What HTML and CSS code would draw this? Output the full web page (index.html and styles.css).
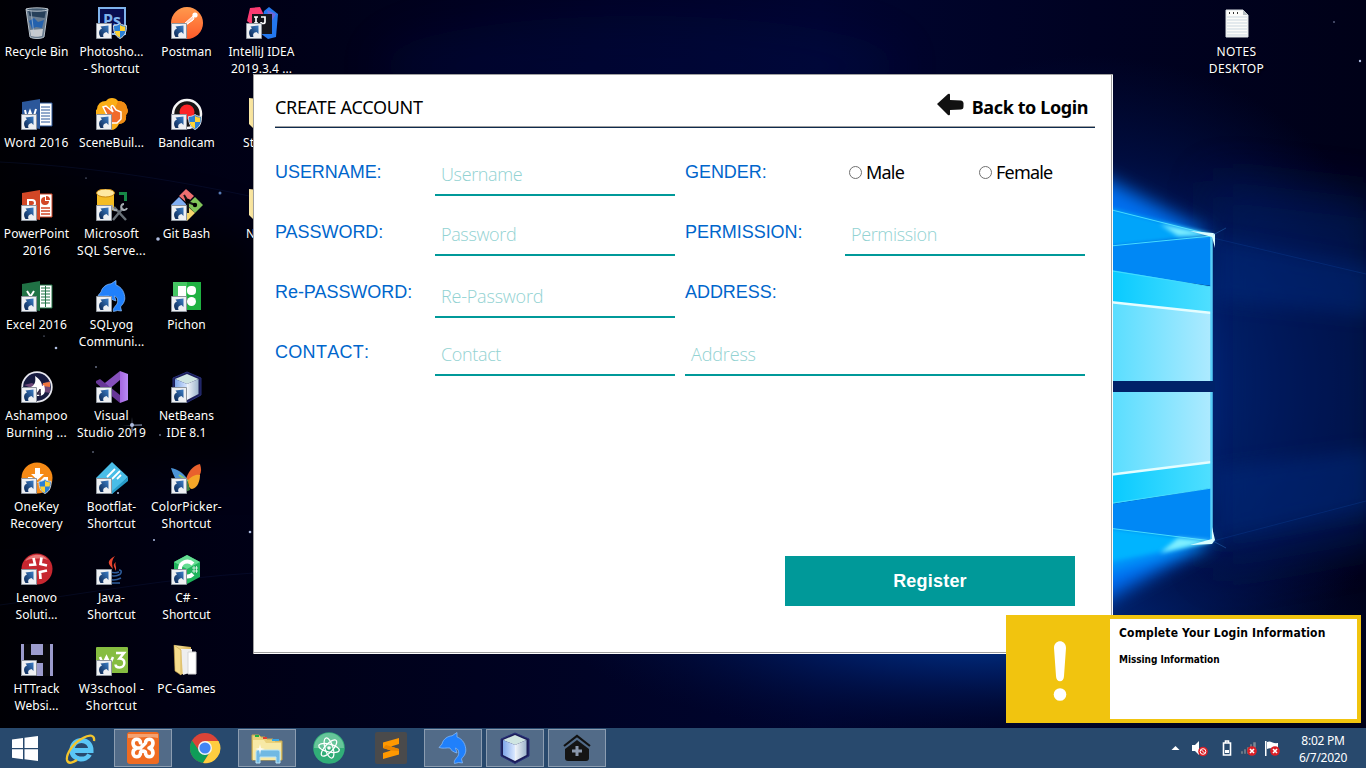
FILE: index.html
```html
<!DOCTYPE html>
<html lang="en">
<head>
<meta charset="utf-8">
<title>Create Account</title>
<link rel="stylesheet" href="styles.css">
</head>
<body>
<svg class="defs" aria-hidden="true">
  <defs>
    <linearGradient id="gShort" x1="0" y1="1" x2="1" y2="0"><stop offset="0" stop-color="#0b2550"/><stop offset="1" stop-color="#3c7ec6"/></linearGradient>
    <linearGradient id="gFolder" x1="0" x2="1"><stop offset="0" stop-color="#fbe9a6"/><stop offset="1" stop-color="#d9b356"/></linearGradient>
    <linearGradient id="gOrange" x1="0" y1="0" x2="0" y2="1"><stop offset="0" stop-color="#ff9a4d"/><stop offset="1" stop-color="#ff5a2a"/></linearGradient>
    <linearGradient id="gCube" x1="0" x2="1"><stop offset="0" stop-color="#7fa6ea"/><stop offset="1" stop-color="#dbe9ff"/></linearGradient>
    <linearGradient id="gCubeR" x1="0" x2="1"><stop offset="0" stop-color="#f2f6fb"/><stop offset="1" stop-color="#9db4cc"/></linearGradient>
    <linearGradient id="gVs" x1="0" x2="1"><stop offset="0" stop-color="#a566e0"/><stop offset="1" stop-color="#b98af5"/></linearGradient>
    <symbol id="shortcut" viewBox="0 0 16 16">
      <path d="M.5.5h15v15H.5z" fill="#eef0f3" stroke="#8e959e"/>
      <path d="M4.500 14C2 10 3 6.500 6 5.500L4.500 3.500 12.500 2.500v8.500L10.500 9C7.500 9.500 6.500 11.500 7.500 14z" fill="url(#gShort)"/>
    </symbol>
    <symbol id="shield" viewBox="0 0 14 16">
      <path d="M7 .5C9 2 11 2.500 13.500 2.500 13.500 9 12 13 7 15.500 2 13 .5 9 .5 2.500 3 2.500 5 2 7 .5z" fill="#2a7fd4" stroke="#d4d9de"/>
      <path d="M7 2c2 1 3 1.500 5.300 1.500L12 8H7zM7 8v6.500C3.500 13 2 10.500 1.800 8z" fill="#ffd332"/>
    </symbol>
    <symbol id="dolphin" viewBox="0 0 32 32">
      <path d="M2 15.500L5 12C6 7 11 4 15 3.800L20 .5V5C26 7 29 13 28.800 19 28 24 25.500 25 24.500 27L25.500 31l-4-.5-4 1C16.500 28.500 19.500 26 21 24c1.500-4 .5-7-2.500-8L20 21c-3.500-1-6-2.500-7-5-4-.5-7 1-11-.5z" fill="#2080fb" stroke="#8dc0ff" stroke-width=".7"/>
    </symbol>
    <symbol id="cube" viewBox="0 0 32 32">
      <path d="M16 1l14 6v17l-14 7.500L2 24V7z" fill="#1b1d58" stroke="#28317a"/>
      <path d="M16 3l11.500 5L16 13 4 8z" fill="#cfe5e2"/>
      <path d="M4 8l12 5v16L4 23z" fill="url(#gCube)"/>
      <path d="M16 13l11.500-5v15L16 29z" fill="url(#gCubeR)"/>
    </symbol>
    <symbol id="badx" viewBox="0 0 10 10">
      <circle cx="5" cy="5" r="4.800" fill="#dc1f26"/><path d="M3 3l4 4M7 3L3 7" stroke="#fff" stroke-width="1.600"/>
    </symbol>
  </defs>
</svg>

<main class="desktop">
  <svg class="wallpaper" viewBox="0 0 1366 768" aria-hidden="true">
    <defs>
      <radialGradient id="wGlow" gradientUnits="userSpaceOnUse" cx="1090" cy="385" r="330"><stop offset="0" stop-color="#0040a8"/><stop offset=".4" stop-color="#002272"/><stop offset=".7" stop-color="#000f45" stop-opacity=".8"/><stop offset="1" stop-color="#000e3e" stop-opacity="0"/></radialGradient>
      <radialGradient id="wFloor"><stop offset="0" stop-color="#003c9c"/><stop offset=".45" stop-color="#001f68" stop-opacity=".75"/><stop offset="1" stop-color="#000c3a" stop-opacity="0"/></radialGradient>
      <linearGradient id="wPane" x1="0" x2="1"><stop offset="0" stop-color="#4fdcff"/><stop offset="1" stop-color="#aeeaff"/></linearGradient>
      <linearGradient id="wCyan" x1="0" x2="1"><stop offset="0" stop-color="#00c8ff"/><stop offset="1" stop-color="#50dfff"/></linearGradient>
      <linearGradient id="wBase" x1="0" x2="1"><stop offset="0" stop-color="#000005"/><stop offset=".12" stop-color="#000012"/><stop offset=".35" stop-color="#000220"/><stop offset=".6" stop-color="#000530"/><stop offset=".8" stop-color="#000222"/><stop offset="1" stop-color="#000118"/></linearGradient>
      <filter id="b2" x="-50%" y="-80%" width="200%" height="260%"><feGaussianBlur stdDeviation="2"/></filter>
      <filter id="b8" x="-50%" y="-50%" width="200%" height="200%"><feGaussianBlur stdDeviation="9"/></filter>
      <filter id="b20" x="-80%" y="-80%" width="260%" height="260%"><feGaussianBlur stdDeviation="22"/></filter>
    </defs>
    <path d="M0 0h1366v768H0z" fill="url(#wBase)"/>
    <path d="M0 190c80 10 180 20 260 50v230c-80-10-180 0-260 40z" fill="#000" opacity=".7" filter="url(#b20)"/>
    <ellipse cx="1090" cy="385" rx="330" ry="330" fill="url(#wGlow)"/>
    <ellipse cx="980" cy="625" rx="420" ry="115" fill="url(#wFloor)"/>
    <ellipse cx="640" cy="66" rx="260" ry="50" fill="#001058" opacity=".25" filter="url(#b20)"/>
    <path d="M1213 180l170 20v340l-170 30z" fill="#001a62" opacity=".6" filter="url(#b20)"/>
    <path d="M1213 238l160 28v50l-160-16zM1213 541l160-32v-60l-160 20z" fill="#00308c" opacity=".35" filter="url(#b8)"/>
    <path d="M1213 238l153 36M1213 541l153-40" stroke="#0b3c91" opacity=".4" fill="none"/>
    <path d="M1090 170l123 65-123 30z" fill="#0070f0" filter="url(#b8)"/>
    <path d="M1090 610l123-69-123-25z" fill="#006cf0" filter="url(#b8)"/>
    <path d="M1090 203l123 32-123 14z" fill="#00a4fa" filter="url(#b2)"/>
    <path d="M1090 575l123-34-123-17z" fill="#00a8ff" filter="url(#b8)"/>
    <path d="M1090 565l123-24-123-15z" fill="#00b4ff" filter="url(#b2)"/>
    <path d="M1100 246l112-10v50l-112-15z" fill="#0088f5"/>
    <path d="M1100 268l112 19v28l-112-14z" fill="url(#wCyan)"/>
    <path d="M1100 301l112 12v68h-112z" fill="url(#wPane)"/>
    <path d="M1100 301l112 12" stroke="#e4fdff" stroke-width="2.500"/>
    <path d="M1100 269l112 18M1100 247l112-11M1100 207l112 28" stroke="#45dcff" stroke-width="1"/>
    <path d="M1100 381h115v11h-115z" fill="#002269"/>
    <path d="M1100 392h112v70l-112 14z" fill="url(#wPane)"/>
    <path d="M1100 476l112-14v26l-112 18z" fill="url(#wCyan)"/>
    <path d="M1100 506l112-18v53l-112-14z" fill="#0088f5"/>
    <path d="M1100 476l112-14" stroke="#e4fdff" stroke-width="2.500"/>
    <path d="M1100 505l112-17M1100 527l112 14" stroke="#45dcff" stroke-width="1"/>
    <path d="M1211.500 236v145M1211.500 392v149" stroke="#56cdf8" stroke-width="2.500"/>
    <path d="M1160 224l53 11-35 1M1160 553l53-12-35-3" fill="#7fefff" filter="url(#b2)"/>
    <path d="M1190 231l23 2 2 1 0 14-3-11zM1190 545l22-6 0-12 3 13-3 4z" fill="#d9fdff"/>
    <path d="M1213 235l13-7M1213 541l13 7" stroke="#3f9df5" opacity=".3"/>
    <path d="M0 162c80 4 160 15 254 35M0 605c90-12 170-27 254-32" stroke="#101e50" fill="none" opacity=".3"/>
    <g fill="#aebce0">
      <circle cx="158" cy="239" r="1.800"/><circle cx="56" cy="348" r="1.300"/><circle cx="132" cy="425" r="2"/><circle cx="250" cy="532" r="1.300"/><circle cx="220" cy="193" r="1.500" fill="#587bb5"/><circle cx="96" cy="367" r=".8"/><circle cx="118" cy="493" r="1"/><circle cx="1360" cy="61" r="1.200"/><circle cx="1334" cy="22" r=".7"/><circle cx="154" cy="540" r="1"/><circle cx="44" cy="336" r=".6"/><circle cx="86" cy="178" r=".6"/><circle cx="93" cy="452" r=".7"/><circle cx="160" cy="435" r=".8"/>
      <path d="M132 417l.6 16h-1.200zM122 425l20-.6v1.200z"/>
    </g>
  </svg>

  <section class="icons">
    <div class="column">
      <div class="item"><svg class="ico" viewBox="0 0 32 32"><path d="M5 2l22 0-4 28c-3 2-11 2-14 0z" fill="#697c90" stroke="#b8c1c9"/><path d="M7 3h18l-1.500 8-15-2z" fill="#263f59"/><ellipse cx="16" cy="2.500" rx="11" ry="1.700" fill="#425a70" stroke="#dce2e8" stroke-width=".8"/><path d="M8 14l5-3 4 4 6-2-2 8-6-1-4 2z" fill="#2461ad"/><path d="M9 23l13-1-1 7c-3 1-8 1-11 0z" fill="#c7cbd0"/><path d="M10 4l3 24" stroke="#bdcddc" opacity=".6"/></svg><span class="label">Recycle Bin</span></div>
      <div class="item"><svg class="ico" viewBox="0 0 32 32"><path d="M18 5h13v23H18z" fill="#fff" stroke="#2b579a"/><path d="M20 9h9M20 12h9M20 15h9M20 18h9M20 21h9M20 24h9" stroke="#2b579a"/><path d="M1 4l18-3v30L1 28z" fill="#2b579a"/><path d="M4 12l2 9 3-8 3 8 3-10" fill="none" stroke="#fff" stroke-width="2"/><use href="#shortcut" y="16" width="16" height="16"/></svg><span class="label spaced">Word 2016</span></div>
      <div class="item"><svg class="ico" viewBox="0 0 32 32"><path d="M18 5h13v23H18z" fill="#fff" stroke="#d24726"/><path d="M24 8a4 4 0 1 0 4 4h-4zM25 7v4h4a4 4 0 0 0-4-4z" fill="#d24726"/><path d="M20 19h9M20 22h9M20 25h9" stroke="#d24726" stroke-width="1.500"/><path d="M1 4l18-3v30L1 28z" fill="#d24726"/><path d="M7 22V11h4c4 0 4 6 0 6H7" fill="none" stroke="#fff" stroke-width="2"/><use href="#shortcut" y="16" width="16" height="16"/></svg><span class="label">PowerPoint<br>2016</span></div>
      <div class="item"><svg class="ico" viewBox="0 0 32 32"><path d="M18 5h13v23H18z" fill="#fff" stroke="#207245"/><path d="M20 8h9M20 11h9M20 14h9M20 17h9M20 20h9M20 23h9M24.500 6v21" stroke="#207245"/><path d="M1 4l18-3v30L1 28z" fill="#207245"/><path d="M6 11l7 11M13 11L6 22" stroke="#fff" stroke-width="2"/><use href="#shortcut" y="16" width="16" height="16"/></svg><span class="label roomy">Excel 2016</span></div>
      <div class="item"><svg class="ico" viewBox="0 0 32 32"><circle cx="16" cy="16" r="14.800" fill="#171b40" stroke="#e7e7ee" stroke-width="1.800"/><path d="M3 14l8-2 5 3 13-5v12l-11-2z" fill="#6e4878"/><path d="M22 12l7-1v5l-7-1z" fill="#ef763e"/><path d="M14 25c-7-2-8-6-4-9 4-2 5-6 4-11 5 3 7 7 7 10l2-1c2 6 1 10-4 11z" fill="#fff"/><path d="M19 19l-3 4h4M19 18v7" stroke="#302541" fill="none" stroke-width="1.500"/><use href="#shortcut" y="16" width="16" height="16"/></svg><span class="label roomy">Ashampoo<br>Burning ...</span></div>
      <div class="item"><svg class="ico" viewBox="0 0 32 32"><circle cx="16" cy="16" r="15.500" fill="#f58a16"/><path d="M14 6h5v6h4l-6.500 6-6.500-6h4zM7 15h4l6 6 6-6h4v6H7z" fill="#fff"/><use href="#shortcut" y="16" width="16" height="16"/><use href="#shield" x="17" y="17" width="14" height="15"/></svg><span class="label roomy">OneKey<br>Recovery</span></div>
      <div class="item"><svg class="ico" viewBox="0 0 32 32"><circle cx="16" cy="16" r="15.500" fill="#c72730"/><path d="M4 8c6-8 18-8 23-1-6-2-16-2-23 1z" fill="#e87878"/><path d="M12.500 5l1.500 6.500-6 .5M20.500 4.500L19.500 11l6.500 1.500M19.500 26L19 19l7-1.500" fill="none" stroke="#fff" stroke-width="2.700"/><use href="#shortcut" y="16" width="16" height="16"/></svg><span class="label">Lenovo<br>Soluti...</span></div>
      <div class="item"><svg class="ico" viewBox="0 0 32 32"><path d="M0 0h32v32H0z" fill="#08080c"/><path d="M0 0h3v32H0zM10 0h12v11H10zM29 0h3v32h-3zM16 19h6v13h-6z" fill="#9b9bcd"/><use href="#shortcut" y="16" width="16" height="16"/></svg><span class="label">HTTrack<br>Websi...</span></div>
    </div>
    <div class="column">
      <div class="item"><svg class="ico" viewBox="0 0 32 32"><path d="M3 1h26v26H3z" fill="#070d50" stroke="#7fb3ed" stroke-width="2"/><text class="glyph" x="7" y="19" font-size="16" fill="#7fb3ed">Ps</text><use href="#shortcut" y="16" width="16" height="16"/><use href="#shield" x="17" y="16" width="14" height="16"/></svg><span class="label">Photosho...<br>- Shortcut</span></div>
      <div class="item"><svg class="ico" viewBox="0 0 32 32"><path d="M16 0q4 0 6 3 8 0 9 7 2 4-1 7 1 8-7 9-3 6-8 6t-7-5q-8-1-7-9-3-4 0-7 1-8 9-8 2-3 6-3z" fill="#fbae17"/><path d="M22 3q8 0 9 7 2 4-1 7 1 8-7 9l-8-6z" fill="#ef8b15"/><path d="M7 9l3-1 7 6-2-5q1-3 3 0l2 3 5 2 0 7-4 4-6 0-3-4-5-1-1-3 5 0z" fill="#f16a2b" stroke="#fff" stroke-width="1.500"/><use href="#shortcut" y="16" width="16" height="16"/></svg><span class="label">SceneBuil...</span></div>
      <div class="item"><svg class="ico" viewBox="0 0 32 32"><path d="M1 3v17c2 4 15 4 17 0V3z" fill="#f4bc23"/><ellipse cx="9.500" cy="4" rx="9" ry="4" fill="#ffe9a0" stroke="#c88a13"/><path d="M23 3h8v9h-3V6h-5z" fill="#168846"/><path d="M18 18l12 13M27 19L17 31" stroke="#687078" stroke-width="2.500"/><path d="M28 15a3 3 0 1 0 3 4M16 16a4 4 0 0 0 5 5" fill="none" stroke="#a5acb2" stroke-width="2"/><use href="#shortcut" y="16" width="16" height="16"/></svg><span class="label roomy">Microsoft<br>SQL Serve...</span></div>
      <div class="item"><svg class="ico" viewBox="0 0 32 32"><use href="#dolphin" width="32" height="32"/><use href="#shortcut" y="16" width="16" height="16"/></svg><span class="label">SQLyog<br>Communi...</span></div>
      <div class="item"><svg class="ico" viewBox="0 0 32 32"><path d="M24 0l8 3v26l-8 3z" fill="url(#gVs)"/><path d="M24 0v9L5 25l-5-3v-3z" fill="#8650bd"/><path d="M0 10l4-2 20 16v8L0 12z" fill="#673697"/><use href="#shortcut" y="16" width="16" height="16"/></svg><span class="label roomy">Visual<br>Studio 2019</span></div>
      <div class="item"><svg class="ico" viewBox="0 0 32 32"><path d="M16 0l16 15-16 17L0 16z" fill="#49bde7"/><path d="M0 16l16 13 16-14v4L16 32 0 20z" fill="#279bc8"/><path d="M11 15l8-8M16 17l8-8M21 17l4-4" stroke="#fff" stroke-width="1.800"/><use href="#shortcut" y="16" width="16" height="16"/></svg><span class="label">Bootflat-<br>Shortcut</span></div>
      <div class="item"><svg class="ico" viewBox="0 0 32 32"><path d="M19 3c-9 5-7 8-2 13-1-5-2-8 2-13zM20 9c-5 4 0 5-1 9 3-4-1-5 1-9z" fill="#e9452f"/><path d="M14 18c2 2 6 2 9 1M14 22c3 2 6 1 9 0M13 26c4 2 8 1 12-1M12 30h12M23 17c4 0 2 5-1 5" fill="none" stroke="#2e5d9c" stroke-width="1.500"/><use href="#shortcut" y="16" width="16" height="16"/></svg><span class="label">Java-<br>Shortcut</span></div>
      <div class="item"><svg class="ico" viewBox="0 0 32 32"><rect y="3" width="32" height="26" rx="1" fill="#86bd41"/><path d="M4 13l3 7 3.500-7 3.500 7 3-7M20 9h8l-4.500 5.500c7 0 6 9 0 9-2 0-4-1-4-3" fill="none" stroke="#fff" stroke-width="2.500"/><use href="#shortcut" y="16" width="16" height="16"/></svg><span class="label spaced">W3school -<br>Shortcut</span></div>
    </div>
    <div class="column">
      <div class="item"><svg class="ico" viewBox="0 0 32 32"><circle cx="16" cy="16" r="16" fill="url(#gOrange)"/><circle cx="24" cy="8" r="2.600" fill="#fff"/><path d="M13 17l9-8 1 3-8 6zM9 22l5-5M16 17l6-4" stroke="#fff" fill="#ffd6c6"/><use href="#shortcut" y="16" width="16" height="16"/></svg><span class="label">Postman</span></div>
      <div class="item"><svg class="ico" viewBox="0 0 32 32"><circle cx="16" cy="16" r="14" fill="#171515" stroke="#f5f5f5" stroke-width="2.500"/><circle cx="16" cy="14" r="7.500" fill="#fb2427"/><use href="#shortcut" y="16" width="16" height="16"/><use href="#shield" x="17" y="16" width="14" height="16"/></svg><span class="label">Bandicam</span></div>
      <div class="item"><svg class="ico" viewBox="0 0 32 32"><path d="M15 0l8 7-7 7-8-7z" fill="#ee6e70"/><path d="M24 8l8 8-8 8-8-8z" fill="#80c35a"/><path d="M8 8l8 8-8 8-8-8z" fill="#7fadf2"/><path d="M16 17l8 7-8 8-8-8z" fill="#f5d66c"/><path d="M13 6l4 6v12M17 13l7 3" stroke="#161616" stroke-width="2"/><circle cx="17" cy="12" r="2.200"/><circle cx="24" cy="16" r="2.200"/><use href="#shortcut" y="16" width="16" height="16"/></svg><span class="label">Git Bash</span></div>
      <div class="item"><svg class="ico" viewBox="0 0 32 32"><path d="M2 2h28v28H2z" fill="#1fb141"/><path d="M2 2h14v14H2z" fill="#45c563"/><path d="M7 6h8v10H7zM11 18h4v8h-4z" fill="#fff"/><rect x="16" y="6" width="9" height="9" rx="4" fill="#fff"/><circle cx="20.500" cy="21.500" r="4.500" fill="#fff"/><use href="#shortcut" y="16" width="16" height="16"/></svg><span class="label">Pichon</span></div>
      <div class="item"><svg class="ico" viewBox="0 0 32 32"><use href="#cube" width="32" height="32"/><use href="#shortcut" y="16" width="16" height="16"/></svg><span class="label">NetBeans<br>IDE 8.1</span></div>
      <div class="item"><svg class="ico" viewBox="0 0 32 32"><path d="M0 6c6 1 12 4 17 12l-5 8C5 19 3 15 0 6z" fill="#4c94d8"/><path d="M15 18c1-7 7-15 14-16 3 9 0 15-12 17z" fill="#e9612d"/><path d="M17 18c4-5 10-6 12-5 0 5-2 13-8 14-3 0-4-4-4-9z" fill="#f4a628"/><path d="M16 17l3 11-5 2z" fill="#428340"/><path d="M8 13l9 6" stroke="#8ec66c" stroke-width="2"/><use href="#shortcut" y="16" width="16" height="16"/></svg><span class="label roomy">ColorPicker-<br>Shortcut</span></div>
      <div class="item"><svg class="ico" viewBox="0 0 32 32"><path d="M16 2l13 7v15l-13 7-13-7V9z" fill="#20b45c"/><path d="M16 2l13 7-13 7-13-7z" fill="#65dc92"/><path d="M22 11c-5-5-13-2-13 5s8 10 13 5" fill="none" stroke="#fff" stroke-width="4"/><path d="M21 15h6M21 18h6M23 13v7M25.500 13v7" stroke="#fff" stroke-width=".7"/><use href="#shortcut" y="16" width="16" height="16"/></svg><span class="label">C# -<br>Shortcut</span></div>
      <div class="item"><svg class="ico" viewBox="0 0 32 32"><path d="M3 1l17 2v24L9 31z" fill="url(#gFolder)"/><path d="M10 5h11v23l-9 3z" fill="#eee"/><path d="M17 8h8v22h-8z" fill="#fff" stroke="#d5d5d5"/><path d="M3 1l7 5v25l-6-4z" fill="#f5dc8c" stroke="#c8a147" stroke-width=".6"/></svg><span class="label">PC-Games</span></div>
    </div>
    <div class="column">
      <div class="item"><svg class="ico" viewBox="0 0 32 32"><path d="M4 1l10-1 6 12-9 10L1 14z" fill="#fb3b72"/><path d="M18 4l5-4 9 7-2 23-8 2-8-6z" fill="#2378ee"/><path d="M21 3l9 4-6 10z" fill="#6c68db"/><path d="M6 7h20v20H6z" fill="#15151b"/><path d="M8 10h4M10 10v6M8 16h4M15 10h4v5c0 2-4 2-4 0" fill="none" stroke="#fff" stroke-width="1.700"/><use href="#shortcut" y="16" width="16" height="16"/></svg><span class="label">IntelliJ IDEA<br>2019.3.4 ...</span></div>
      <div class="item behind"><svg class="ico" viewBox="0 0 32 32"><path d="M3 0l26 3v26L8 31l-5-5z" fill="url(#gFolder)"/></svg><span class="label">St</span></div>
      <div class="item behind"><svg class="ico" viewBox="0 0 32 32"><path d="M3 0l26 3v26L8 31l-5-5z" fill="url(#gFolder)"/></svg><span class="label inset">N</span></div>
    </div>
    <div class="column far">
      <div class="item"><svg class="ico" viewBox="0 0 32 32"><path d="M5 3h17l5 5v22H5z" fill="#fcfcfa" stroke="#d9dfe3"/><path d="M6 10h20M6 13h20M6 16h20M6 19h20M6 22h20M6 25h20M6 28h20" stroke="#cbd7e0"/><path d="M22 3v5h5z" fill="#b6bdc1"/><path d="M8 6h1M12 6h1M16 6h1" stroke="#333" stroke-width="2"/></svg><span class="label spaced">NOTES<br>DESKTOP</span></div>
    </div>
  </section>

  <section class="dialog">
    <header class="head">
      <h1 class="title">CREATE ACCOUNT</h1>
      <a class="back"><svg class="arrow" viewBox="0 0 28 24"><path d="M1 11L12 1q2-1 2 1v5l11 .5q3 .5 2.500 4.500c0 3 0 4-2.500 4.500L14 17v4q0 2-2 1z" fill="#111"/></svg><span>Back to Login</span></a>
    </header>
    <form class="form">
      <span class="name">USERNAME:</span>
      <span class="field">Username</span>
      <span class="name">GENDER:</span>
      <span class="choices"><span class="choice"><i class="radio"></i>Male</span><span class="choice"><i class="radio"></i>Female</span></span>
      <span class="name">PASSWORD:</span>
      <span class="field">Password</span>
      <span class="name">PERMISSION:</span>
      <span class="field">Permission</span>
      <span class="name">Re-PASSWORD:</span>
      <span class="field low">Re-Password</span>
      <span class="name address">ADDRESS:</span>
      <span class="name contact">CONTACT:</span>
      <span class="field">Contact</span>
      <span class="field span">Address</span>
    </form>
    <button class="register">Register</button>
  </section>

  <aside class="toast">
    <div class="toast-mark"><svg width="16" height="62" viewBox="0 0 16 62"><path d="M2 8C2-1 14-1 14 8l-2 28c0 7-8 7-8 0z" fill="#fff"/><circle cx="8" cy="54.500" r="6.300" fill="#fff"/></svg></div>
    <div class="toast-body"><strong class="toast-title">Complete Your Login Information</strong><b class="toast-text">Missing Information</b></div>
  </aside>

  <footer class="taskbar">
    <div class="start"><svg width="26" height="25" viewBox="0 0 26 25"><path d="M0 3.500L11 2v10H0zM12.500 1.800L26 0v12H12.500zM0 13.300h11v10L0 21.800zM12.500 13.300H26V25l-13.500-1.800z" fill="#fff"/></svg></div>
    <div class="task"><svg class="ico" viewBox="0 0 32 32"><path d="M7 18.500h19C26 5 7 5 7 18.500c0 10 14 11 17.500 4" fill="none" stroke="#5ac6f6" stroke-width="5"/><path d="M29 9c1-6-4-7-11-3C8 11 1 22 2 28c1 5 7 2 10 0" fill="none" stroke="#f4c52c" stroke-width="2.300"/></svg></div>
    <div class="task open"><svg class="ico" viewBox="0 0 32 32"><rect width="32" height="32" rx="3" fill="#ef6b22"/><path d="M1 2h30v4C21 4 10 6 1 6z" fill="#f3a171"/><path d="M13.500 11c0-5-7.500-5-7.500 0 0 3 2 4.500 4 5-2 .5-4 2-4 5 0 5 7.500 5 7.500 0 0-2.500 5-2.500 5 0 0 5 7.500 5 7.500 0 0-3-2-4.500-4-5 2-.5 4-2 4-5 0-5-7.500-5-7.500 0M10 16h3.500l5-5" fill="none" stroke="#fff" stroke-width="3.600" stroke-linecap="round" stroke-linejoin="round"/></svg></div>
    <div class="task"><svg class="ico" viewBox="0 0 32 32"><circle cx="16" cy="16" r="15" fill="#dc4437"/><path d="M3 8.500A15 15 0 0 0 14 31l7-11H11z" fill="#0f9d58"/><path d="M16 9h13.500A15 15 0 0 1 14 31l7-11z" fill="#ffcd40"/><circle cx="16" cy="16" r="7" fill="#f5f5f5"/><circle cx="16" cy="16" r="5.600" fill="#4285f4"/></svg></div>
    <div class="task open"><svg class="ico" viewBox="0 0 32 32"><path d="M1 3h7l2 2h4l2 2h6l2 2h7v19H1z" fill="#ead17a" stroke="#c5a64d"/><path d="M2 8h11l2 3h15v17H2z" fill="#f7e9a6"/><path d="M4 4h4" stroke="#1faf44" stroke-width="2"/><path d="M12 6h4" stroke="#df4034" stroke-width="2"/><path d="M21 8h7" stroke="#38a6e4" stroke-width="2"/><path d="M5 20q0-2 2-2h20q2 0 2 2v11h-4v-6H9v6H5z" fill="#71b9e3" stroke="#bce5f5"/><path d="M9 12l1 4 4 1-4 1-1 5-1-5-4-1 4-1z" fill="#fff" opacity=".8"/></svg></div>
    <div class="task"><svg class="ico" viewBox="0 0 32 32"><circle cx="16" cy="16" r="15.800" fill="#31ae78"/><path d="M1 16a15 15 0 0 1 30 0z" fill="#66c59a"/><g fill="none" stroke="#fff" stroke-width="1.200"><ellipse cx="16" cy="16" rx="10.500" ry="4" transform="rotate(13 16 16)"/><ellipse cx="16" cy="16" rx="10.500" ry="4" transform="rotate(73 16 16)"/><ellipse cx="16" cy="16" rx="10.500" ry="4" transform="rotate(133 16 16)"/></g><circle cx="16" cy="16" r="1.800" fill="#fff"/></svg></div>
    <div class="task"><svg class="ico" viewBox="0 0 32 32"><rect width="32" height="32" rx="2" fill="#4a4a4b"/><path d="M8 10.500L24 6v6l-8 2.500 8 2.500v5.500L8 27v-6l8-2.500-8-2.500z" fill="#ff9800"/><path d="M11 13l13 4v2l-8-.5-8-2.500z" fill="#e88400"/></svg></div>
    <div class="task open"><svg class="ico" viewBox="0 0 32 32"><use href="#dolphin" width="32" height="32"/></svg></div>
    <div class="task open"><svg class="ico" viewBox="0 0 32 32"><use href="#cube" width="32" height="32"/></svg></div>
    <div class="task open"><svg class="ico" viewBox="0 0 32 32"><path d="M3 14L16 4l13 10" fill="none" stroke="#111" stroke-width="2.200"/><path d="M4 17L16 8l12 9v9q0 3-3 3H7q-3 0-3-3z" fill="#141414"/><path d="M16 14v10M11 19h10" stroke="#8997ac" stroke-width="3"/></svg></div>
    <div class="tray">
      <svg width="110" height="20" viewBox="0 0 110 20">
        <path d="M1.500 12l4-4 4 4z" fill="#fff"/>
        <path d="M22 7h3l4-4v14l-4-4h-3z" fill="#fff"/><circle cx="33" cy="13.500" r="4.800" fill="#dc1f26"/><circle cx="33" cy="13.500" r="2.800" fill="none" stroke="#fff"/><path d="M31 11.500l4 4" stroke="#fff"/>
        <path d="M53.500 5h7v12h-7zM55.500 3h3v2h-3z" fill="none" stroke="#fff" stroke-width="1.600"/><path d="M55 12h4v3h-4z" fill="#fff"/>
        <path d="M71 13h2v3h-2zM74 11h2v5h-2zM77 9h2v7h-2zM80 6h2v6h-2zM83 4h3v6h-3z" fill="#7b8998" stroke="#35475a" stroke-width=".5"/><use href="#badx" x="77" y="8" width="10" height="10"/>
        <path d="M95 3h1.500v15H95z" fill="#fff"/><path d="M97 4c4-2 5 2 11 1v6c-5 1-7-2-11 0z" fill="#fff"/><use href="#badx" x="100" y="8" width="10" height="10"/>
      </svg>
      <div class="clock">8:02 PM<br>6/7/2020</div>
    </div>
  </footer>
</main>
</body>
</html>
```
FILE: styles.css
```css
* { box-sizing: border-box; }
body { margin: 0; font-family: "Noto Sans", "Open Sans", sans-serif; }
.defs { position: absolute; width: 0; height: 0; }
.desktop { position: relative; width: 1366px; height: 768px; overflow: hidden; background: #000010; display: flex; flex-direction: column; }
.wallpaper { position: absolute; left: 0; top: 0; width: 1366px; height: 768px; }
.icons { position: relative; flex: 1; min-height: 0; display: flex; margin-left: -1px; }
.column { width: 75px; flex: none; }
.far { margin-left: 900px; }
.item { height: 91px; padding-top: 7px; display: flex; flex-direction: column; align-items: center; }
.ico { width: 32px; height: 32px; display: block; flex: none; }
.glyph { font-family: "Open Sans", sans-serif; font-weight: 700; }
.label { margin-top: 4px; color: #fff; font-size: 12px; line-height: 17px; letter-spacing: .05px; text-align: center; white-space: nowrap; text-shadow: 1px 1px 2px #000; }
.roomy { letter-spacing: .22px; }
.spaced { letter-spacing: .4px; }
.behind .label { align-self: flex-start; margin-left: 19px; }
.behind .inset { margin-left: 22px; }

.dialog { position: absolute; left: 253px; top: 74px; width: 860px; height: 580px; background: #fff; border-top: 1px solid #a0a0a0; border-left: 1px solid #a0a0a0; box-shadow: inset -1px -1px #fff, inset -2px -2px #a0a0a0; padding-left: 21px; }
.head { width: 820px; height: 53px; display: flex; align-items: center; justify-content: space-between; padding: 12px 7px 0 0; border-bottom: 1px solid #0e2b4e; box-shadow: inset 0 -1px #a0a0a0; }
.title { margin: 0; font-size: 18px; font-weight: 400; line-height: 24px; letter-spacing: -.28px; }
.back { display: flex; align-items: center; gap: 8px; font-size: 18px; font-weight: 700; line-height: 24px; letter-spacing: -.4px; }
.arrow { width: 28px; height: 24px; margin-top: -4px; }
.form { display: grid; grid-template-columns: 160px 250px 160px 240px; grid-template-rows: repeat(4, 60px); margin-top: 14px; width: 810px; }
.name { font: 18px/60px "Liberation Sans", Arial, sans-serif; letter-spacing: -.05px; color: #0066cc; }
.contact { font-kerning: none; letter-spacing: .3px; }
.field { width: 240px; height: 54px; padding: 11px 6px 0; border-bottom: 2px solid #009999; color: #92d2d2; font-family: "Open Sans", sans-serif; font-weight: 300; font-size: 18px; line-height: 42px; letter-spacing: -.35px; }
.address { grid-column: 3 / span 2; }
.span { grid-column: 3 / span 2; width: 400px; letter-spacing: -.15px; }
.low { height: 56px; padding-top: 13px; letter-spacing: -.2px; }
.register { display: block; width: 290px; height: 50px; margin: 174px 0 0 510px; padding: 1px 0 0; border: 0; background: #009999; color: #fff; font: bold 18px "Liberation Sans", Arial, sans-serif; letter-spacing: .2px; }
.choices { display: flex; padding-left: 4px; }
.choice { width: 130px; flex: none; display: flex; align-items: center; font-size: 18px; gap: 4px; letter-spacing: -.8px; }
.radio { width: 13px; height: 13px; border: 1px solid #707070; border-radius: 50%; }

.toast { position: absolute; left: 1006px; top: 615px; width: 355px; height: 108px; background: #fff; border: 4px solid #f1c40f; display: flex; }
.toast-mark { width: 100px; background: #f1c40f; display: flex; align-items: center; justify-content: center; padding-top: 4px; }
.toast-body { padding: 6px 9px; display: flex; flex-direction: column; font-family: "DejaVu Sans Condensed", "DejaVu Sans", sans-serif; font-stretch: condensed; white-space: nowrap; }
.toast-title { font-size: 12px; line-height: 17px; letter-spacing: .17px; }
.toast-text { font-size: 10px; line-height: 14px; margin-top: 11px; letter-spacing: -.05px; }

.taskbar { position: relative; height: 40px; display: flex; align-items: center; gap: 4px; background: #28496d; }
.start { width: 48px; display: flex; justify-content: center; padding-left: 2px; }
.task { width: 58px; height: 38px; display: flex; align-items: center; justify-content: center; }
.open { background: #526b88; border: 1px solid #8c9db1; }
.tray { margin-left: auto; display: flex; align-items: center; gap: 17px; padding-right: 17px; color: #fff; }
.clock { width: 52px; padding-top: 1px; font-size: 12px; line-height: 17px; letter-spacing: -.25px; text-align: center; white-space: nowrap; }
```
